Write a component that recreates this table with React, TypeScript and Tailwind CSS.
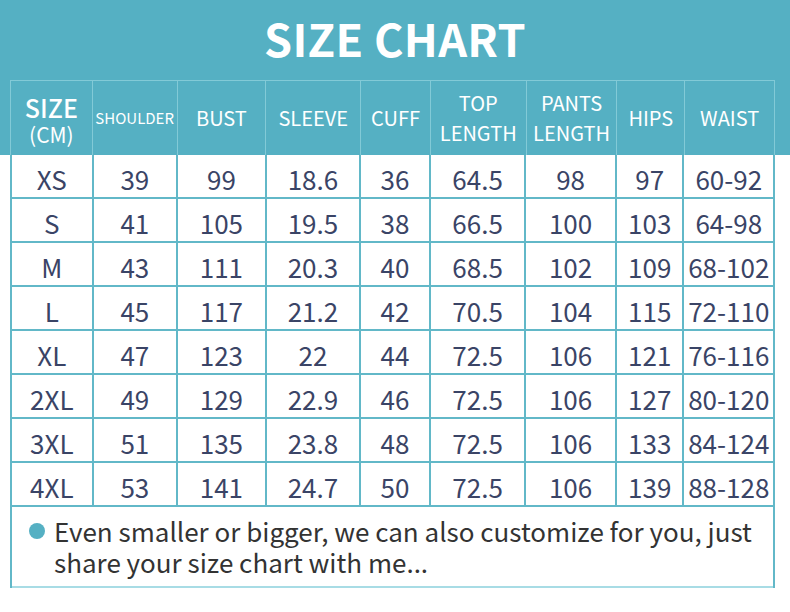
const cols = ["w-[82px]", "w-[85px]", "w-[89px]", "w-[95px]", "w-[70px]", "w-[96px]", "w-[91px]", "w-[68px]", "w-[89px]"];

const rows = [
  ["XS", "39", "99", "18.6", "36", "64.5", "98", "97", "60-92"],
  ["S", "41", "105", "19.5", "38", "66.5", "100", "103", "64-98"],
  ["M", "43", "111", "20.3", "40", "68.5", "102", "109", "68-102"],
  ["L", "45", "117", "21.2", "42", "70.5", "104", "115", "72-110"],
  ["XL", "47", "123", "22", "44", "72.5", "106", "121", "76-116"],
  ["2XL", "49", "129", "22.9", "46", "72.5", "106", "127", "80-120"],
  ["3XL", "51", "135", "23.8", "48", "72.5", "106", "133", "84-124"],
  ["4XL", "53", "141", "24.7", "50", "72.5", "106", "139", "88-128"],
];

const font = { fontFamily: '"Noto Sans CJK SC", "Noto Sans", sans-serif' };

export default function App() {
  return (
    <div className="w-[790px] h-[612px] bg-white overflow-hidden" style={font}>
      {/* teal band: title + header row */}
      <div className="bg-[#55b0c3]">
        <div className="h-[80px] flex items-center justify-center">
          <h1 className="text-[45px] font-bold text-white tracking-[0.3px] leading-none pb-[6px]">SIZE CHART</h1>
        </div>
        <div className="ml-[10px] w-[765px] h-[75px] flex border-t border-l border-r border-[#82cad7]">
          <div className={`${cols[0]} border-r border-[#82cad7] flex flex-col items-center justify-center pt-[8px] text-white`}>
            <div className="h-[26px] flex items-center text-[25px] font-medium">SIZE</div>
            <div className="h-[28px] flex items-center text-[21px]">(CM)</div>
          </div>
          <div className={`${cols[1]} border-r border-[#82cad7] flex items-center justify-center text-white text-[15px]`}>SHOULDER</div>
          <div className={`${cols[2]} border-r border-[#82cad7] flex items-center justify-center text-white text-[20px]`}>BUST</div>
          <div className={`${cols[3]} border-r border-[#82cad7] flex items-center justify-center text-white text-[20px]`}>SLEEVE</div>
          <div className={`${cols[4]} border-r border-[#82cad7] flex items-center justify-center text-white text-[20px]`}>CUFF</div>
          <div className={`${cols[5]} border-r border-[#82cad7] flex flex-col items-center justify-center text-white text-[20px] leading-[30px]`}>
            <span>TOP</span>
            <span>LENGTH</span>
          </div>
          <div className={`${cols[6]} border-r border-[#82cad7] flex flex-col items-center justify-center text-white text-[20px] leading-[30px]`}>
            <span>PANTS</span>
            <span>LENGTH</span>
          </div>
          <div className={`${cols[7]} border-r border-[#82cad7] flex items-center justify-center text-white text-[20px]`}>HIPS</div>
          <div className={`${cols[8]} flex items-center justify-center text-white text-[20px]`}>WAIST</div>
        </div>
      </div>

      {/* body rows */}
      <div className="ml-[10px] w-[765px] border-l-2 border-r-2 border-[#62b8c8]">
        {rows.map((r) => (
          <div key={r[0]} className="flex h-[44px] border-b-2 border-[#62b8c8]">
            {r.map((v, i) => (
              <div
                key={i}
                className={`${cols[i]} ${i < 8 ? "border-r-2 border-[#62b8c8]" : ""} flex items-center justify-center pt-[4px] text-[26px] text-[#3a4466]`}
              >
                {v}
              </div>
            ))}
          </div>
        ))}
        {/* note */}
        <div className="h-[81px] flex gap-[9px] pl-[17px] pt-[8px] border-b-2 border-[#a8dce5]">
          <span className="w-[16px] h-[16px] rounded-full bg-[#55b0c3] mt-[8px] shrink-0" />
          <div className="text-[26px] text-[#333333]">
            <div className="h-[31px] flex items-center">Even smaller or bigger, we can also customize for you, just</div>
            <div className="h-[31px] flex items-center">share your size chart with me...</div>
          </div>
        </div>
      </div>
    </div>
  );
}
